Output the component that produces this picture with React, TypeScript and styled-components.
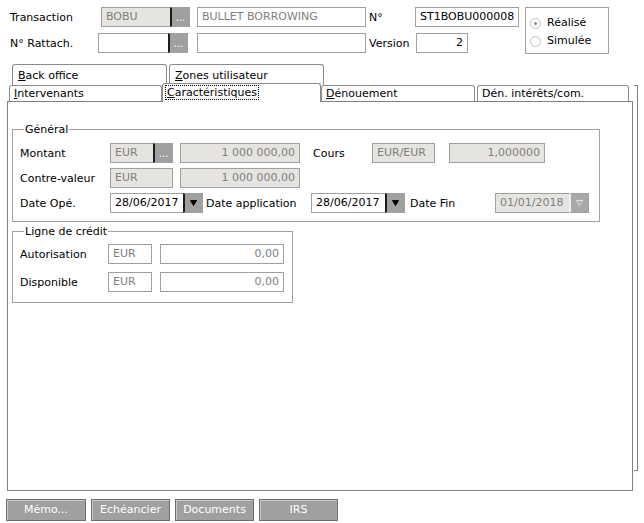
import React from "react";
import styled, { createGlobalStyle } from "styled-components";

const GlobalStyle = createGlobalStyle`
  body {
    margin: 0;
    background: #fff;
    font-family: "DejaVu Sans", Verdana, sans-serif;
    font-size: 11px;
    color: #000;
  }
`;

type BoxProps = { $w: number; $disabled?: boolean; $right?: boolean; $muted?: boolean };

const Page = styled.div`
  width: 644px;
  height: 523px;
  box-sizing: border-box;
  padding-top: 7px;
`;

const HeaderBar = styled.div`
  display: flex;
  align-items: flex-start;
  padding-left: 10px;
`;

const HeaderRows = styled.div`
  display: flex;
  flex-direction: column;
  gap: 6px;
`;

const Row = styled.div`
  display: flex;
  align-items: center;
  height: 20px;
`;

const Label = styled.span<{ $w: number; $ml?: number }>`
  width: ${(p) => p.$w}px;
  margin-left: ${(p) => p.$ml || 0}px;
  flex-shrink: 0;
  white-space: nowrap;
  line-height: 20px;
  padding-top: 1px;
`;

const Field = styled.div<BoxProps>`
  width: ${(p) => p.$w}px;
  height: 20px;
  box-sizing: border-box;
  flex-shrink: 0;
  border: 1px solid #a0a0a0;
  background: ${(p) => (p.$disabled ? "#e6e4e1" : "#fff")};
  color: ${(p) => (p.$disabled || p.$muted ? "#808080" : "#000")};
  text-align: ${(p) => (p.$right ? "right" : "left")};
  padding: 0 4px;
  line-height: 17px;
  white-space: nowrap;
  overflow: hidden;
`;

const Combo = styled.div<{ $w: number; $ml?: number }>`
  display: flex;
  width: ${(p) => p.$w}px;
  margin-left: ${(p) => p.$ml || 0}px;
  flex-shrink: 0;
`;

const ComboField = styled(Field)`
  flex: 1;
  width: auto;
  border-right: none;
`;

const PickButton = styled.div<{ $disabled?: boolean; $dots?: boolean }>`
  width: 20px;
  height: 20px;
  box-sizing: border-box;
  flex-shrink: 0;
  background: ${(p) => (p.$disabled ? "#a9a9a9" : "#a0a0a0")};
  border: 1px solid #a0a0a0;
  border-left: 2px solid ${(p) => (p.$disabled ? "#f0f0f0" : "#1c1c1c")};
  color: #fff;
  font-size: 10px;
  line-height: 10px;
  display: flex;
  align-items: ${(p) => (p.$dots ? "flex-end" : "center")};
  justify-content: center;
  padding-bottom: ${(p) => (p.$dots ? 3 : 0)}px;
`;

const Gap = styled.span<{ $w: number }>`
  width: ${(p) => p.$w}px;
  flex-shrink: 0;
`;

const RadioBox = styled.div`
  margin-left: 6px;
  width: 84px;
  height: 47px;
  box-sizing: border-box;
  border: 1px solid #a0a0a0;
  padding: 8px 0 0 4px;
  display: flex;
  flex-direction: column;
  gap: 4px;
`;

const RadioRow = styled.div`
  display: flex;
  align-items: center;
  gap: 6px;
  line-height: 14px;
`;

const RadioCircle = styled.span<{ $on?: boolean }>`
  width: 11px;
  height: 11px;
  box-sizing: border-box;
  border-radius: 50%;
  border: 1px solid #c0c0c0;
  background: #fff;
  display: flex;
  align-items: center;
  justify-content: center;
  &::after {
    content: "";
    width: 3px;
    height: 3px;
    border-radius: 50%;
    background: ${(p) => (p.$on ? "#8a8a8a" : "transparent")};
  }
`;

const TabsArea = styled.div`
  margin-top: 10px;
  padding-left: 7px;
`;

const BackTabRow = styled.div`
  display: flex;
  gap: 2px;
  padding-left: 5px;
  height: 21px;
`;

const FrontTabRow = styled.div`
  display: flex;
  align-items: flex-end;
  height: 18px;
  padding-left: 2px;
  margin-top: -2px;
  position: relative;
  z-index: 1;
`;

const Tab = styled.div<{ $w: number; $ml?: number; $active?: boolean }>`
  width: ${(p) => p.$w}px;
  margin-left: ${(p) => p.$ml || 0}px;
  height: ${(p) => (p.$active ? 19 : 16)}px;
  margin-bottom: ${(p) => (p.$active ? -1 : 0)}px;
  box-sizing: border-box;
  flex-shrink: 0;
  border: 1px solid #8c8c8c;
  border-bottom: none;
  border-radius: 3px 3px 0 0;
  background: #fff;
  padding-left: ${(p) => (p.$active ? 3 : 4)}px;
  line-height: ${(p) => (p.$active ? 18 : 16)}px;
  white-space: nowrap;
`;

const BackTab = styled(Tab)`
  height: 21px;
  line-height: 22px;
  padding-left: 5px;
`;

const FocusText = styled.span`
  outline: 1px dotted #000;
  outline-offset: 0;
  padding: 0 1px;
`;

const PanelWrap = styled.div`
  position: relative;
  width: 626px;
  &::after {
    content: "";
    position: absolute;
    right: -5px;
    top: -16px;
    width: 4px;
    height: 386px;
    box-sizing: border-box;
    border: 1px solid #808080;
    border-left: none;
  }
`;

const Panel = styled.div`
  height: 390px;
  box-sizing: border-box;
  border: 1px solid #808080;
  padding: 21px 0 0 4px;
  background: #fff;
`;

const Group = styled.fieldset<{ $w: number }>`
  width: ${(p) => p.$w}px;
  box-sizing: border-box;
  margin: 0;
  min-width: 0;
  border: 1px solid #a0a0a0;
  padding: 7px 7px 8px 7px;
  display: flex;
  flex-direction: column;
  gap: 5px;
  & + & {
    margin-top: 3px;
  }
`;

const GroupTitle = styled.legend`
  padding: 0 1px;
  margin-left: 4px;
  line-height: 13px;
`;

const CreditGroup = styled(Group)`
  padding-top: 6px;
  padding-bottom: 10px;
  gap: 8px;
`;

const ButtonBar = styled.div`
  display: flex;
  gap: 5px;
  margin-top: 8px;
  padding-left: 6px;
`;

const ActionButton = styled.div<{ $w: number }>`
  width: ${(p) => p.$w}px;
  height: 22px;
  box-sizing: border-box;
  background: #a0a0a0;
  border: 1px solid #6e6e6e;
  box-shadow: inset 1px 1px 0 #c8c8c8;
  color: #fff;
  text-align: center;
  line-height: 19px;
`;

const Arrow = ({ disabled }: { disabled?: boolean }) => (
  <svg width="7" height="6" viewBox="0 0 7 6">
    <path
      d="M0.5 0.5 L6.5 0.5 L3.5 5.5 Z"
      fill={disabled ? "none" : "#000"}
      stroke={disabled ? "#e0e0e0" : "#000"}
      strokeWidth="1"
    />
  </svg>
);

export default function App() {
  return (
    <Page>
      <GlobalStyle />
      <HeaderBar>
        <HeaderRows>
          <Row>
            <Label $w={91}>Transaction</Label>
            <Combo $w={89}>
              <ComboField $w={0} $disabled>BOBU</ComboField>
              <PickButton $dots>...</PickButton>
            </Combo>
            <Gap $w={7} />
            <Field $w={169} $muted>BULLET BORROWING</Field>
            <Label $w={46} $ml={3}>N°</Label>
            <Field $w={104}>ST1BOBU000008</Field>
          </Row>
          <Row>
            <Label $w={88}>N° Rattach.</Label>
            <Combo $w={90}>
              <ComboField $w={0} />
              <PickButton $dots>...</PickButton>
            </Combo>
            <Gap $w={9} />
            <Field $w={169} />
            <Label $w={47} $ml={3}>Version</Label>
            <Field $w={52} $right>2</Field>
          </Row>
        </HeaderRows>
        <RadioBox>
          <RadioRow>
            <RadioCircle $on />
            Réalisé
          </RadioRow>
          <RadioRow>
            <RadioCircle />
            Simulée
          </RadioRow>
        </RadioBox>
      </HeaderBar>

      <TabsArea>
        <BackTabRow>
          <BackTab $w={155}>
            <u>B</u>ack office
          </BackTab>
          <BackTab $w={155}>
            <u>Z</u>ones utilisateur
          </BackTab>
        </BackTabRow>
        <FrontTabRow>
          <Tab $w={153}>
            <u>I</u>ntervenants
          </Tab>
          <Tab $w={159} $active>
            <FocusText>
              <u>C</u>aractéristiques
            </FocusText>
          </Tab>
          <Tab $w={154}>
            <u>D</u>énouement
          </Tab>
          <Tab $w={152} $ml={2}>
            Dén. intérêts/com.
          </Tab>
        </FrontTabRow>
        <PanelWrap>
          <Panel>
            <Group $w={588}>
              <GroupTitle>Général</GroupTitle>
              <Row>
                <Label $w={90}>Montant</Label>
                <Combo $w={63}>
                  <ComboField $w={0} $disabled>EUR</ComboField>
                  <PickButton $dots>...</PickButton>
                </Combo>
                <Gap $w={7} />
                <Field $w={120} $disabled $right>1 000 000,00</Field>
                <Label $w={59} $ml={13}>Cours</Label>
                <Field $w={63} $disabled>EUR/EUR</Field>
                <Gap $w={14} />
                <Field $w={96} $disabled $right>1,000000</Field>
              </Row>
              <Row>
                <Label $w={90}>Contre-valeur</Label>
                <Field $w={63} $disabled>EUR</Field>
                <Gap $w={7} />
                <Field $w={120} $disabled $right>1 000 000,00</Field>
              </Row>
              <Row>
                <Label $w={90}>Date Opé.</Label>
                <Combo $w={93}>
                  <ComboField $w={0}>28/06/2017</ComboField>
                  <PickButton>
                    <Arrow />
                  </PickButton>
                </Combo>
                <Label $w={105} $ml={3}>Date application</Label>
                <Combo $w={94}>
                  <ComboField $w={0}>28/06/2017</ComboField>
                  <PickButton>
                    <Arrow />
                  </PickButton>
                </Combo>
                <Label $w={85} $ml={5}>Date Fin</Label>
                <Combo $w={94}>
                  <ComboField $w={0} $disabled>01/01/2018</ComboField>
                  <PickButton $disabled>
                    <Arrow disabled />
                  </PickButton>
                </Combo>
              </Row>
            </Group>
            <CreditGroup $w={281}>
              <GroupTitle>Ligne de crédit</GroupTitle>
              <Row>
                <Label $w={88}>Autorisation</Label>
                <Field $w={44} $muted>EUR</Field>
                <Gap $w={8} />
                <Field $w={124} $muted $right>0,00</Field>
              </Row>
              <Row>
                <Label $w={88}>Disponible</Label>
                <Field $w={44} $muted>EUR</Field>
                <Gap $w={8} />
                <Field $w={124} $muted $right>0,00</Field>
              </Row>
            </CreditGroup>
          </Panel>
        </PanelWrap>
      </TabsArea>

      <ButtonBar>
        <ActionButton $w={80}>Mémo...</ActionButton>
        <ActionButton $w={79}>Echéancier</ActionButton>
        <ActionButton $w={79}>Documents</ActionButton>
        <ActionButton $w={79}>IRS</ActionButton>
      </ButtonBar>
    </Page>
  );
}
